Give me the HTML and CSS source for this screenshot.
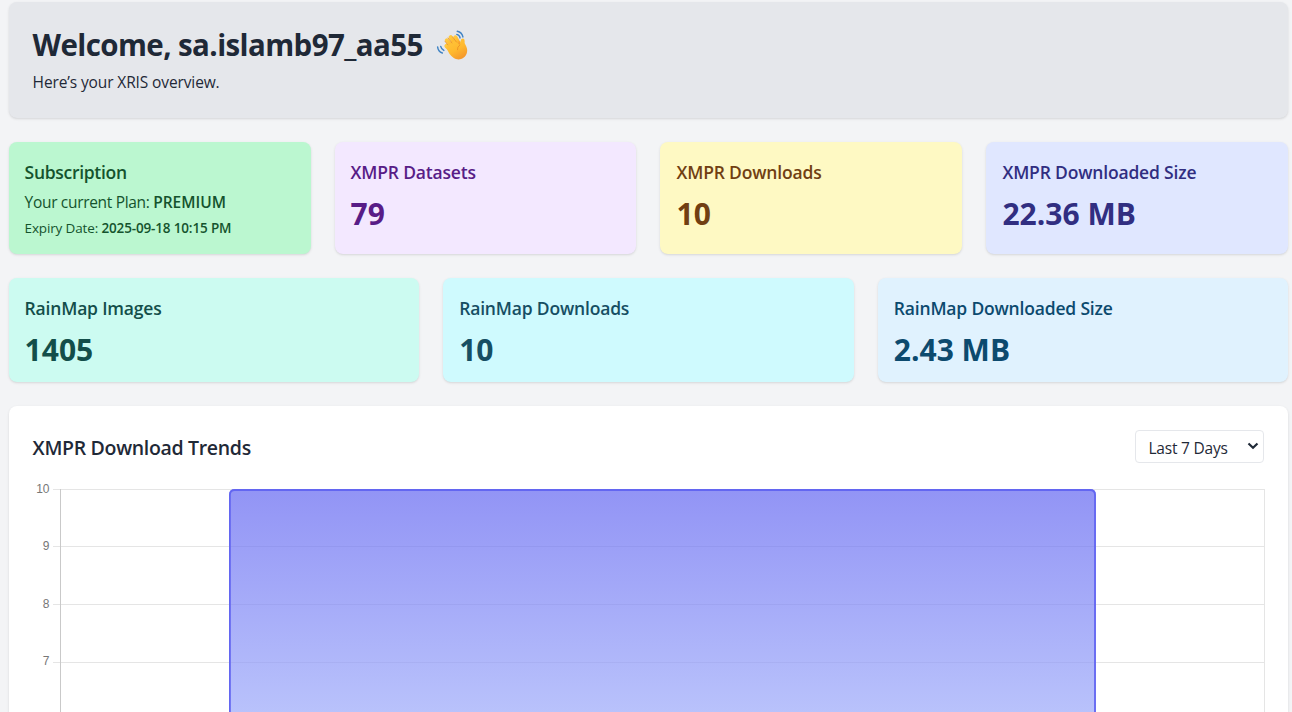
FILE: index.html
```
<!DOCTYPE html>
<html lang="en">
<head>
<meta charset="utf-8">
<title>XRIS Dashboard</title>
<link rel="stylesheet" href="styles.css">
</head>
<body>
<main class="dashboard">
  <header class="welcome">
    <h1 class="welcome-title"><span class="welcome-text">Welcome, sa.islamb97_aa55</span>
      <svg class="wave" viewBox="0 0 36 36" aria-hidden="true">
        <defs><linearGradient id="skin" x1="0" y1="0" x2=".6" y2="1"><stop offset="0" stop-color="#ffc83d"/><stop offset=".6" stop-color="#ffb92e"/><stop offset="1" stop-color="#f59a2c"/></linearGradient></defs>
        <g fill="none" stroke="#3f83c4" stroke-width="1.5" stroke-linecap="round">
          <path d="M22.5 3.5q5 1 6 6M22 6.8q3 .8 3.5 3.7M1.7 20q.5 5 5 6.500M5 19.500q.6 3 3.300 4.300"/>
        </g>
        <g fill="none" stroke="url(#skin)" stroke-linecap="round" stroke-width="4.300">
          <path d="M19 22 11.500 13"/><path d="M21 19 15.500 9.800"/><path d="M25 18 20.500 9.800"/><path d="M17 25 11 19"/>
        </g>
        <path fill="url(#skin)" d="M11 20 20 13l5 5c1-4 1-7 3.500-7 2 0 2 3 1.800 5 2 4 3.700 7 2.200 11-2 6-9 8-14 4.500-3-2-6-6-7.500-11.500z"/>
        <path fill="none" stroke="#e88a26" stroke-width=".8" stroke-linecap="round" d="m12.500 18-3-4M16.800 15.800l-4-5.300M21.500 14.800l-4-5.500M25.200 18q-3 2-2.500 5"/>
      </svg></h1>
    <p class="welcome-sub">Here’s your XRIS overview.</p>
  </header>

  <section class="cards cards-four">
    <article class="card green">
      <h2 class="card-title title-sub">Subscription</h2>
      <p class="plan"><span>Your current Plan: </span><strong>PREMIUM</strong></p>
      <p class="expiry"><span>Expiry Date: </span><strong>2025-09-18 10:15 PM</strong></p>
    </article>
    <article class="card purple"><h2 class="card-title">XMPR Datasets</h2><p class="value">79</p></article>
    <article class="card yellow"><h2 class="card-title">XMPR Downloads</h2><p class="value">10</p></article>
    <article class="card indigo"><h2 class="card-title">XMPR Downloaded Size</h2><p class="value">22.36 MB</p></article>
  </section>

  <section class="cards cards-three">
    <article class="card teal"><h2 class="card-title">RainMap Images</h2><p class="value">1405</p></article>
    <article class="card cyan"><h2 class="card-title">RainMap Downloads</h2><p class="value">10</p></article>
    <article class="card sky"><h2 class="card-title">RainMap Downloaded Size</h2><p class="value">2.43 MB</p></article>
  </section>

  <section class="panel">
    <div class="panel-head">
      <h2 class="panel-title">XMPR Download Trends</h2>
      <button class="range" type="button"><span>Last 7 Days</span>
        <svg class="chevron" viewBox="0 0 12 8" aria-hidden="true"><path d="M1.500 1.500 6 5.700l4.500-4.200"/></svg>
      </button>
    </div>
    <svg class="chart" viewBox="0 0 1232 233" width="1232" height="233">
      <defs><linearGradient id="bar" gradientUnits="userSpaceOnUse" x1="0" y1="10" x2="0" y2="275"><stop offset="0" stop-color="#6366f1" stop-opacity=".7"/><stop offset="1" stop-color="#a5b4fc" stop-opacity=".7"/></linearGradient></defs>
      <path class="grid" d="M20 10.500H1232M20 67.500H1232M20 125.500H1232M20 183.500H1232M1231.500 10V233"/>
      <path class="axis" d="M27.500 10V233"/>
      <path fill="url(#bar)" d="M196 233V16q0-6 6-6H1057q6 0 6 6V233z"/>
      <path class="bar-edge" d="M196.900 235V16q0-5 5-5H1057q5 0 5 5V235"/>
      <g class="ticks"><text x="16.500" y="14">10</text><text x="16.500" y="71">9</text><text x="16.500" y="129">8</text><text x="16.500" y="186">7</text></g>
    </svg>
  </section>
</main>
</body>
</html>
```
FILE: styles.css
```
* { box-sizing: border-box; margin: 0; }
body {
  height: 712px;
  overflow: hidden;
  background: #f3f4f6;
  color: #1f2937;
  font-family: "Open Sans", "Noto Sans", sans-serif;
  font-size: 16px;
  line-height: 24px;
}
.dashboard {
  width: 1279.800px;
  margin: 0 0 0 8.600px;
  padding-top: 2px;
  display: flex;
  flex-direction: column;
  gap: 24px;
}
.welcome, .card, .panel {
  border-radius: 8px;
  box-shadow: 0 1px 3px rgba(0, 0, 0, .1), 0 1px 2px -1px rgba(0, 0, 0, .1);
}
.welcome { height: 116px; padding: 24px; background: #e5e7eb; }
.welcome-title {
  display: flex;
  align-items: center;
  gap: 13px;
  height: 36px;
  margin-bottom: 8px;
  padding-top: 2px;
  font-size: 29.500px;
  font-weight: 700;
  letter-spacing: -.6px;
  line-height: 36px;
  white-space: nowrap;
}
.wave { width: 34px; height: 34px; }
.welcome-sub { font-size: 15.500px; letter-spacing: -.12px; }
.cards { display: grid; gap: 24px; }
.cards-four { grid-template-columns: repeat(4, 1fr); height: 112px; }
.cards-three { grid-template-columns: repeat(3, 1fr); height: 104px; }
.card { padding: 16px; white-space: nowrap; }
.card-title { font-size: 17.500px; font-weight: 550; letter-spacing: -.18px; line-height: 28px; }
.title-sub { letter-spacing: -.3px; }
.value { margin-top: 8px; padding-top: 2px; height: 36px; font-size: 30px; font-weight: 700; line-height: 36px; }
.plan { margin-top: 4px; font-size: 15.500px; letter-spacing: -.32px; }
.expiry { margin-top: 4px; font-size: 13.500px; letter-spacing: -.15px; line-height: 20px; }
strong { font-weight: 600; }
.plan strong { letter-spacing: 0; }
.expiry strong { letter-spacing: -.15px; }
.green { background: #bbf7d0; color: #14532d; }
.purple { background: #f3e8ff; color: #581c87; }
.yellow { background: #fef9c3; color: #713f12; }
.indigo { background: #e0e7ff; color: #312e81; }
.teal { background: #ccfbf1; color: #134e4a; }
.cyan { background: #cffafe; color: #164e63; }
.sky { background: #e0f2fe; color: #0c4a6e; }
.panel { height: 306px; padding: 24px 24px 0; border-radius: 8px 8px 0 0; background: #fff; }
.panel-head { display: flex; justify-content: space-between; height: 33px; margin-bottom: 16px; }
.panel-title { font-size: 19.500px; font-weight: 550; letter-spacing: -.32px; line-height: 36px; }
.range {
  display: flex;
  align-items: center;
  justify-content: space-between;
  width: 129px;
  height: 33px;
  padding: 2px 4px 0 12px;
  border: 1px solid #e5e7eb;
  border-radius: 4px;
  background: #fff;
  color: #1f2937;
  font: 15.500px/24px "Open Sans", "Noto Sans", sans-serif;
  letter-spacing: -.2px;
  white-space: nowrap;
}
.chevron { width: 12px; height: 8px; margin-top: -3px; fill: none; stroke: #1f2937; stroke-width: 2.200; }
.chart { display: block; }
.grid { fill: none; stroke: #e5e5e5; }
.axis { fill: none; stroke: #c9c9c9; }
.bar-edge { fill: none; stroke: #6366f1; stroke-width: 1.800; }
.ticks { fill: #777; font-family: "Liberation Sans", Arial, sans-serif; font-size: 12px; text-anchor: end; }
```
